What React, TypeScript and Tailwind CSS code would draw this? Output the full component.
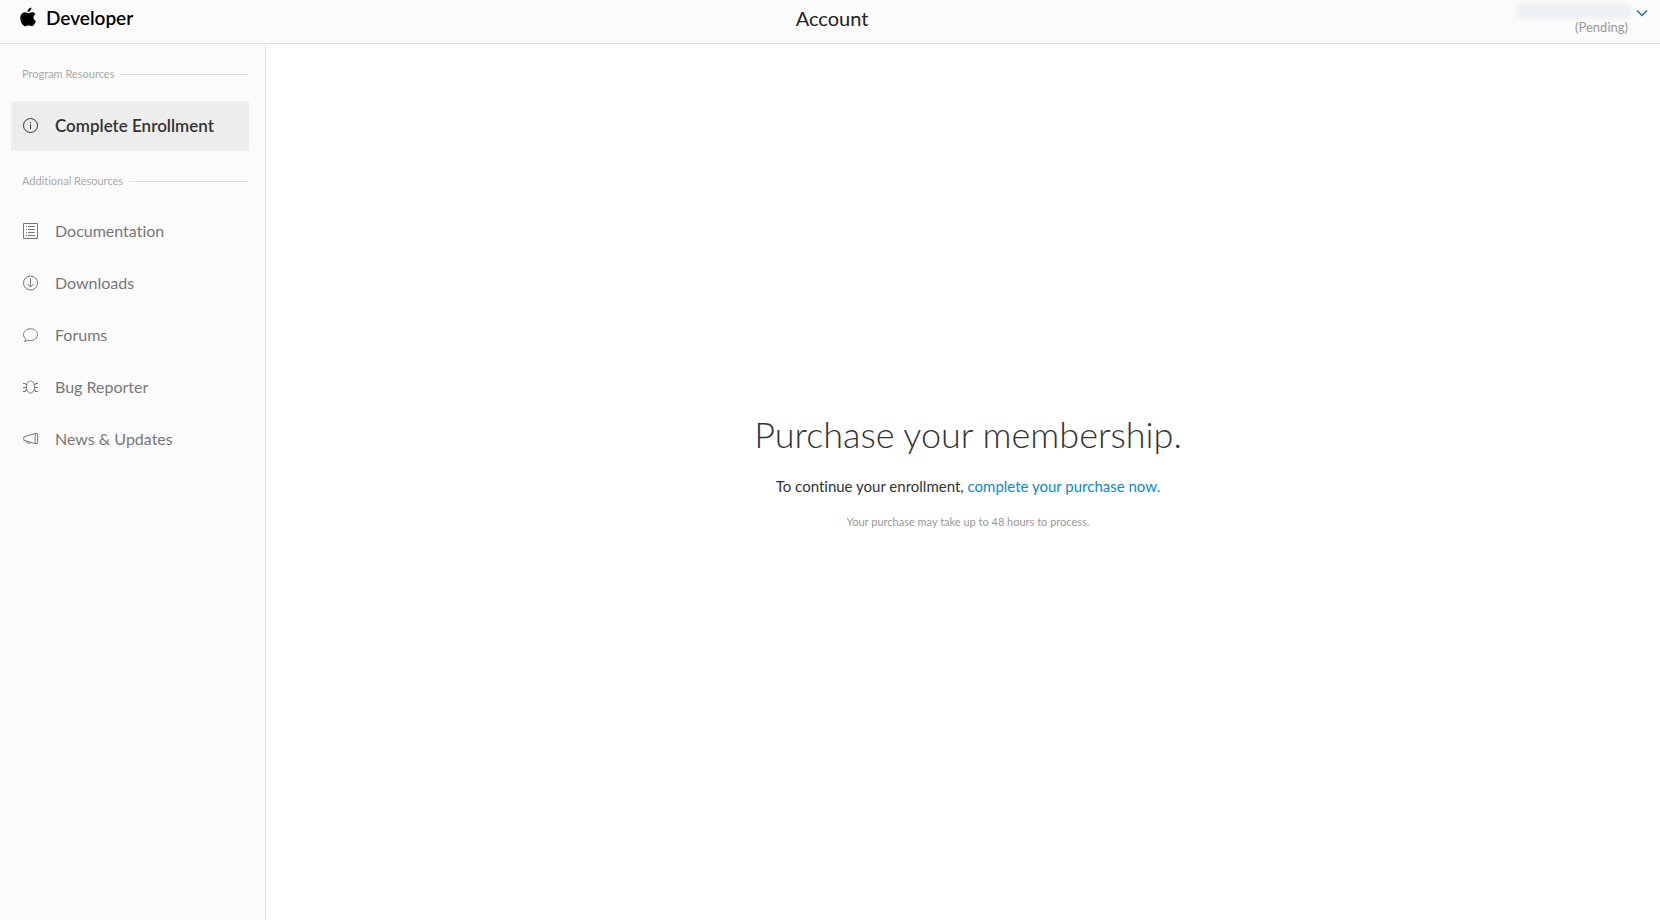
import React from 'react';

type IconProps = { children: React.ReactNode };

const Icon: React.FC<IconProps> = ({ children }) => (
  <svg
    className="w-4 h-4 shrink-0"
    viewBox="0 0 16 16"
    fill="none"
    stroke="currentColor"
    strokeWidth="1"
    aria-hidden="true"
  >
    {children}
  </svg>
);

const resources = [
  {
    label: 'Documentation',
    icon: (
      <Icon>
        <path d="M.5.5h14v15H.5z" />
        <path d="M3 3.500h1M5 3.500h7M3 6.500h1M5 6.500h7M3 9.500h1M5 9.500h7M3 12.500h1M5 12.500h7" />
      </Icon>
    ),
  },
  {
    label: 'Downloads',
    icon: (
      <Icon>
        <circle cx="7.500" cy="8" r="7" />
        <path d="M7.500 3.500V12M4.500 9l3 3 3-3" />
      </Icon>
    ),
  },
  {
    label: 'Forums',
    icon: (
      <Icon>
        <path d="M2.700 11.800C1.300 10.800.5 9.300.5 7.700.5 4.300 3.600 1.800 7.500 1.800s7 2.500 7 5.900-3.100 5.900-7 5.900c-1 0-1.900-.1-2.700-.4-.9.800-2 1.200-3.400 1.200.8-.7 1.300-1.600 1.300-2.600z" />
      </Icon>
    ),
  },
  {
    label: 'Bug Reporter',
    icon: (
      <Icon>
        <path d="M7.500 2c2.300 0 4 2.400 4 6s-1.700 6-4 6-4-2.400-4-6 1.700-6 4-6z" />
        <path d="M0 4.500h2.500v1H4M0 8.500h3.500M0 12.500h2.500v-1.500H4M15 4.500h-2.500v1H11M15 8.500h-3.500M15 12.500h-2.500v-1.500H11" />
      </Icon>
    ),
  },
  {
    label: 'News & Updates',
    icon: (
      <Icon>
        <path d="M12.500 2.500.8 5.800v3.600l11.700 3.200M3.500 10.200c0 1.500 1 2.100 2.300 2.100 1 0 1.600-.4 1.900-1" />
        <path d="M12.500 2.500h1.800c.6 3 .6 7 0 10.100h-1.800c-.6-3-.6-7 0-10.100z" />
      </Icon>
    ),
  },
];

const SectionTitle: React.FC<{ title: string }> = ({ title }) => (
  <h2 className="flex items-center gap-1.5 pl-[11px] text-[11px] leading-4 text-[#aaa]">
    {title}
    <span className="flex-1 h-px bg-[#dedede]"></span>
  </h2>
);

const Header: React.FC = () => (
  <header className="grid grid-cols-3 items-center h-11 pl-4 pr-3 bg-[#fbfbfb] border-b border-[#dcdcdc]">
    <a href="#" className="flex items-center gap-2.5 pl-1 pb-2 text-[19px] leading-6 font-semibold text-black">
      <svg className="w-4 h-5 mb-0.5" viewBox="0 0 16 20" fill="currentColor" aria-hidden="true">
        <path d="M11.300.5c.1 1.200-.3 2.300-1 3.100-.7.900-1.700 1.400-2.700 1.400-.1-1.200.4-2.200 1-3C9.300 1.200 10.300.6 11.300.5zM15.500 15c-.7 1.900-2.200 4.300-3.700 4.300-1.200 0-1.700-.7-3.200-.7s-2 .7-3.200.7C3.200 19.300.3 15 .3 11.200c0-3.700 2.300-5.900 4.700-5.900 1.400 0 2.600.9 3.500.9.8 0 2.200-1 3.900-1 1.200 0 2.400.6 3.100 1.700-2.900 1.700-2.500 5.900.5 7.100z" />
      </svg>
      Developer
    </a>
    <div className="pb-2 text-center text-xl leading-6 text-[#222]">Account</div>
    <button type="button" aria-label="Account menu" className="flex items-start justify-end gap-1 pb-1.5 text-[#999]">
      <span className="flex flex-col items-end">
        <span className="w-29 h-4 rounded-full bg-[#edf0f2] blur-[2px]"></span>
        <span className="pr-1 text-[13px] leading-4">(Pending)</span>
      </span>
      <svg className="w-3 h-3 mt-1 text-[#1c72b0]" viewBox="0 0 12 12" fill="none" stroke="currentColor" strokeWidth="1.500" aria-hidden="true">
        <path d="M1 3.500l5 5 5-5" />
      </svg>
    </button>
  </header>
);

const Sidebar: React.FC = () => (
  <aside className="w-[266px] shrink-0 pl-[11px] pr-4 pt-[22px] bg-[#fbfbfb] border-r border-[#e3e3e3]">
    <SectionTitle title="Program Resources" />
    <a href="#" className="flex items-center gap-4 h-[50px] mt-[19px] mb-[22px] pl-3 bg-[#ededed] text-[17px] font-semibold text-[#333]">
      <Icon>
        <circle cx="7.500" cy="7.500" r="7" />
        <path d="M7.500 4v1.200M7.500 6.200v5" />
      </Icon>
      Complete Enrollment
    </a>
    <SectionTitle title="Additional Resources" />
    <nav className="flex flex-col gap-3 mt-[22px]">
      {resources.map(({ label, icon }) => (
        <a key={label} href="#" className="flex items-center gap-4 h-10 pl-3 text-base text-[#777]">
          {icon}
          {label}
        </a>
      ))}
    </nav>
  </aside>
);

export default function App() {
  return (
    <div className="flex flex-col min-h-screen bg-white font-[Lato,sans-serif] [font-variant-ligatures:none]">
      <Header />
      <div className="flex flex-1">
        <Sidebar />
        <main className="flex flex-1 flex-col items-center justify-center pl-2.5 pb-6 text-center">
          <h1 className="text-4xl leading-[48px] font-light text-[#333]">Purchase your membership.</h1>
          <p className="mt-4 text-[15px] leading-6 text-[#333]">
            To continue your enrollment, <a href="#" className="text-[#0d88c9]">complete your purchase now.</a>
          </p>
          <p className="mt-4 text-[11px] leading-4 text-[#999]">Your purchase may take up to 48 hours to process.</p>
        </main>
      </div>
    </div>
  );
}
